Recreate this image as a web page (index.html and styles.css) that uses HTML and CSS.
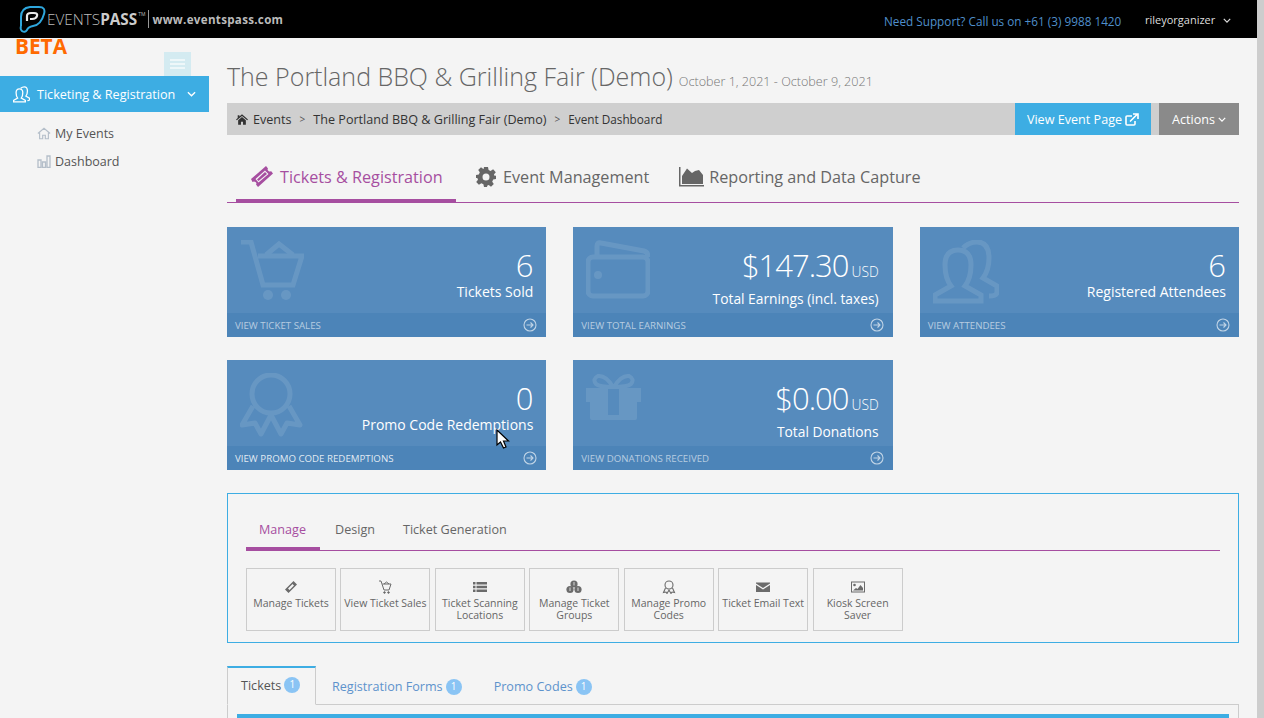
FILE: index.html
```html
<!DOCTYPE html>
<html lang="en">
<head>
  <meta charset="UTF-8" />
  <title>Event Dashboard</title>
  <link rel="stylesheet" href="styles.css">
</head>
<body>
  <div class="page">
    <header class="topbar">
      <div class="logo">
        <svg class="logo-mark" viewBox="0 0 28 28" width="28" height="28">
          <path d="M2 21 V12 Q2 3 11 2 H20 Q27 2 25 9 Q22 20 14 21 Q9 22 8 25 Q6 28 3 26 Q1 25 2 21" fill="none" stroke="#2ea6dc" stroke-width="2"/>
          <path d="M8 16 V11 Q8 8 12 8 H15 Q19 8 18 11 Q17 14 13 14 H11" fill="none" stroke="#e8e8e8" stroke-width="2.2"/>
        </svg>
        <span class="logo-name">EVENTS<b>PASS</b></span><sup class="logo-tm">TM</sup>
        <span class="logo-url">www.eventspass.com</span>
      </div>
      <div class="support">Need Support? Call us on +61 (3) 9988 1420</div>
      <div class="user">rileyorganizer
        <svg class="chev" viewBox="0 0 10 6" width="8" height="5"><path d="M1 1 L5 5 L9 1" fill="none" stroke="currentColor" stroke-width="1.5"/></svg>
      </div>
    </header>

    <div class="layout">
      <aside class="sidebar">
        <div class="side-top">
          <span class="beta">BETA</span>
          <button class="burger"><i></i><i></i><i></i></button>
        </div>
        <div class="side-active">
          <svg viewBox="0 0 66 64" width="17" height="17" fill="none" stroke="#fff" stroke-width="5"><path d="M2 61 V55 L18 46 Q12 38 12 25 Q12 10 25 10 Q38 10 38 25 Q38 38 32 46 L48 55 V61 Z"/><path d="M30 8 Q36 2 44 2 Q56 2 56 18 Q56 30 50 38 L64 46 V52 Q64 56 56 56"/></svg>
          <span>Ticketing &amp; Registration</span>
          <svg class="chev" viewBox="0 0 10 6" width="9" height="6"><path d="M1 1 L5 5 L9 1" fill="none" stroke="currentColor" stroke-width="1.5"/></svg>
        </div>
        <ul class="side-list">
          <li>
            <svg viewBox="0 0 16 14" width="14" height="13" fill="none" stroke="#b4bec9" stroke-width="1.3"><path d="M1 7 L8 1 L15 7 M3 6 V13 H6.5 V9 H9.5 V13 H13 V6"/></svg>
            My Events
          </li>
          <li>
            <svg viewBox="0 0 14 13" width="14" height="13" fill="none" stroke="#b4bec9" stroke-width="1.3"><path d="M1 5 H4 V12.5 H1 Z M5.5 7 H8.5 V12.5 H5.5 Z M10 1 H13 V12.5 H10 Z"/></svg>
            Dashboard
          </li>
        </ul>
      </aside>

      <main class="content">
        <div class="title-row">
          <h1>The Portland BBQ &amp; Grilling Fair (Demo)</h1>
          <small>October 1, 2021 - October 9, 2021</small>
        </div>

        <div class="crumbs">
          <svg viewBox="0 0 14 12" width="12" height="11" fill="#333"><path d="M7 0 L14 6 L13 7 L7 2 L1 7 L0 6 L2 4.3 V1 H4 V2.6 Z M2.5 7 L7 3.2 L11.5 7 V12 H8.2 V8.5 H5.8 V12 H2.5 Z"/></svg>
          <span>Events</span>
          <span class="sep">&gt;</span>
          <span>The Portland BBQ &amp; Grilling Fair (Demo)</span>
          <span class="sep">&gt;</span>
          <span class="crumb-last">Event Dashboard</span>
          <a class="btn btn-blue">View Event Page
            <svg viewBox="0 0 14 13" width="14" height="13" fill="none" stroke="#fff" stroke-width="1.6"><path d="M10 8 V11 Q10 12 9 12 H2 Q1 12 1 11 V4 Q1 3 2 3 H7"/><path d="M5 8.5 L12 1.5 M8 1 H13 V6" /></svg>
          </a>
          <a class="btn btn-grey">Actions
            <svg class="chev" viewBox="0 0 10 6" width="8" height="5"><path d="M1 1 L5 5 L9 1" fill="none" stroke="currentColor" stroke-width="1.6"/></svg>
          </a>
        </div>

        <nav class="main-tabs">
          <a class="main-tab active">
            <svg viewBox="0 0 22 21" width="22" height="21" fill="#a64ea0"><path fill-rule="evenodd" d="M15 0 L17 2.5 Q16 4 17.5 5 Q19 6 20 5 L22 7.5 L7 21 L5 18.5 Q6 17 4.5 16 Q3 15 1.5 16 L0 13 Z M14 4.5 L4.5 13 L7.5 16.5 L17.5 8 Z M14 6 L16 8 L7.5 15 L6 13.5 Z"/></svg>
            Tickets &amp; Registration
          </a>
          <a class="main-tab">
            <svg viewBox="0 0 20 20" width="20" height="20" fill="#666"><path fill-rule="evenodd" d="M8 0 H12 L12.6 3 L14.6 3.9 L17.1 2.2 L17.8 2.9 L19.8 5.2 L17.9 7.4 L18.8 9 L20 8.5 V12 L17.2 12.6 L16.2 14.8 L17.8 17.1 L15 19.8 L12.7 18 L11.4 18.6 L11 20 H8 L7.4 17.2 L5.4 16.2 L2.9 17.8 L0.2 15 L2 12.7 L1.3 11 L0 11 V8 L2.8 7.4 L3.8 5.2 L2.2 2.9 L5 0.2 L7.3 2 L7.6 2 Z M10 6.5 A3.5 3.5 0 1 0 10 13.5 A3.5 3.5 0 1 0 10 6.5 Z"/></svg>
            Event Management
          </a>
          <a class="main-tab">
            <svg viewBox="0 0 25 20" width="25" height="20" fill="#666"><path d="M0 0 H1.5 V18 H25 V19.5 H0 Z M3 17 V9 L8 1.5 L13 6 L16 4 L20 3 L24 8 V17 Z"/></svg>
            Reporting and Data Capture
          </a>
        </nav>

        <section class="cards">
          <article class="card">
            <div class="card-body">
              <svg class="card-icon" viewBox="0 0 64 64" width="64" height="64" fill="none" stroke="#fff" stroke-width="5"><path d="M1 2 H11 L23 45 H53 L62 16 H18"/><path d="M26 15 L39 4 L53 15"/><circle cx="28" cy="55" r="5" fill="#fff" stroke="none"/><circle cx="46" cy="55" r="5" fill="#fff" stroke="none"/></svg>
              <div class="card-text">
                <div class="num">6</div>
                <div class="label">Tickets Sold</div>
              </div>
            </div>
            <a class="card-foot">View Ticket Sales
              <svg viewBox="0 0 14 14" width="14" height="14" fill="none" stroke="#fff" stroke-width="1.1"><circle cx="7" cy="7" r="6"/><path d="M3.5 7 H10 M7.5 4.5 L10 7 L7.5 9.5"/></svg>
            </a>
          </article>

          <article class="card">
            <div class="card-body">
              <svg class="card-icon" viewBox="0 0 64 64" width="64" height="64" fill="none" stroke="#fff" stroke-width="5"><rect x="2" y="17" width="60" height="39" rx="5"/><path d="M11 17 V6 Q11 2 15 3 L58 11 Q62 12 62 17"/><circle cx="12" cy="35" r="4" fill="#fff" stroke="none"/></svg>
              <div class="card-text">
                <div class="num money"><span class="amount">$147.30</span><span class="usd">USD</span></div>
                <div class="label">Total Earnings (incl. taxes)</div>
              </div>
            </div>
            <a class="card-foot">View Total Earnings
              <svg viewBox="0 0 14 14" width="14" height="14" fill="none" stroke="#fff" stroke-width="1.1"><circle cx="7" cy="7" r="6"/><path d="M3.5 7 H10 M7.5 4.5 L10 7 L7.5 9.5"/></svg>
            </a>
          </article>

          <article class="card">
            <div class="card-body">
              <svg class="card-icon" viewBox="0 0 66 64" width="66" height="64" fill="none" stroke="#fff" stroke-width="5"><path d="M2 61 V55 L18 46 Q12 38 12 25 Q12 10 25 10 Q38 10 38 25 Q38 38 32 46 L48 55 V61 Z"/><path d="M30 8 Q36 2 44 2 Q56 2 56 18 Q56 30 50 38 L64 46 V52 Q64 56 56 56"/></svg>
              <div class="card-text">
                <div class="num">6</div>
                <div class="label">Registered Attendees</div>
              </div>
            </div>
            <a class="card-foot">View Attendees
              <svg viewBox="0 0 14 14" width="14" height="14" fill="none" stroke="#fff" stroke-width="1.1"><circle cx="7" cy="7" r="6"/><path d="M3.5 7 H10 M7.5 4.5 L10 7 L7.5 9.5"/></svg>
            </a>
          </article>

          <article class="card">
            <div class="card-body">
              <svg class="card-icon" viewBox="0 0 64 64" width="64" height="64" fill="none" stroke="#fff" stroke-width="5" stroke-linejoin="round"><circle cx="31" cy="21" r="19"/><path d="M13 33 L2 52 L15 50 L21 61 L31 42 L41 61 L47 50 L60 52 L49 33"/></svg>
              <div class="card-text">
                <div class="num">0</div>
                <div class="label">Promo Code Redemptions</div>
              </div>
            </div>
            <a class="card-foot hover">View Promo Code Redemptions
              <svg viewBox="0 0 14 14" width="14" height="14" fill="none" stroke="#fff" stroke-width="1.1"><circle cx="7" cy="7" r="6"/><path d="M3.5 7 H10 M7.5 4.5 L10 7 L7.5 9.5"/></svg>
            </a>
            <svg class="cursor" viewBox="0 0 14 20" width="14" height="20"><path d="M1 1 V16 L4.5 13 L7.5 19 L10 18 L7.5 12 L12.5 12 Z" fill="#fff" stroke="#000" stroke-width="1.2"/></svg>
          </article>

          <article class="card">
            <div class="card-body">
              <svg class="card-icon" viewBox="0 0 64 64" width="64" height="64"><path fill="#fff" fill-rule="evenodd" d="M0 15 H55 V29 H51 V45 Q51 47 49 47 H6 Q4 47 4 45 V29 H0 Z M22 16 H33 V42 H22 Z"/><path d="M27 14 Q20 2 12 3 Q6 6 10 11 Q13 14 27 14 Q42 14 45 11 Q49 6 43 3 Q35 2 28 14" fill="none" stroke="#fff" stroke-width="4"/></svg>
              <div class="card-text">
                <div class="num money"><span class="amount">$0.00</span><span class="usd">USD</span></div>
                <div class="label">Total Donations</div>
              </div>
            </div>
            <a class="card-foot">View Donations Received
              <svg viewBox="0 0 14 14" width="14" height="14" fill="none" stroke="#fff" stroke-width="1.1"><circle cx="7" cy="7" r="6"/><path d="M3.5 7 H10 M7.5 4.5 L10 7 L7.5 9.5"/></svg>
            </a>
          </article>
        </section>

        <section class="panel">
          <nav class="sub-tabs">
            <a class="sub-tab active">Manage</a>
            <a class="sub-tab">Design</a>
            <a class="sub-tab">Ticket Generation</a>
          </nav>
          <div class="tiles">
            <a class="tile">
              <svg viewBox="0 0 14 14" width="14" height="14" fill="#6b6b6b"><path d="M9.5 1 L13 4.5 L4.5 13 L1 9.5 Z M8.5 4 L4 8.5 L5.5 10 L10 5.5 Z" fill-rule="evenodd"/></svg>
              <span>Manage Tickets</span>
            </a>
            <a class="tile">
              <svg viewBox="0 0 14 14" width="14" height="14" fill="none" stroke="#6b6b6b" stroke-width="1"><path d="M1 1 H3 L6 10 H11 L13 4 H4.5 M6 4 L8.5 2 L11 4"/><circle cx="6.5" cy="12.5" r=".8" fill="#6b6b6b"/><circle cx="10.5" cy="12.5" r=".8" fill="#6b6b6b"/></svg>
              <span>View Ticket Sales</span>
            </a>
            <a class="tile">
              <svg viewBox="0 0 14 14" width="14" height="14" fill="#6b6b6b"><path d="M0 2 H2.5 V4.5 H0 Z M3.5 2 H14 V4.5 H3.5 Z M0 5.7 H2.5 V8.2 H0 Z M3.5 5.7 H14 V8.2 H3.5 Z M0 9.4 H2.5 V12 H0 Z M3.5 9.4 H14 V12 H3.5 Z"/></svg>
              <span>Ticket Scanning Locations</span>
            </a>
            <a class="tile">
              <svg viewBox="0 0 16 14" width="16" height="14" fill="#6b6b6b"><circle cx="8" cy="4" r="3.6"/><circle cx="4" cy="9.5" r="3.6"/><circle cx="12" cy="9.5" r="3.6"/><path d="M4 7.5 V11 M12 7.5 V11 M8 2 V5.5" stroke="#f4f4f4" stroke-width=".8"/></svg>
              <span>Manage Ticket Groups</span>
            </a>
            <a class="tile">
              <svg viewBox="0 0 14 14" width="14" height="14" fill="none" stroke="#6b6b6b" stroke-width="1.1"><circle cx="7" cy="5" r="4"/><path d="M3.5 8 L1.5 12.5 L4 12 L5 13.5 L7 10 L9 13.5 L10 12 L12.5 12.5 L10.5 8"/></svg>
              <span>Manage Promo Codes</span>
            </a>
            <a class="tile">
              <svg viewBox="0 0 14 14" width="14" height="14" fill="#6b6b6b"><path d="M0 2.5 H14 V3.5 L7 8 L0 3.5 Z M0 5 L7 9.5 L14 5 V12 H0 Z"/></svg>
              <span>Ticket Email Text</span>
            </a>
            <a class="tile">
              <svg viewBox="0 0 14 14" width="14" height="14" fill="#6b6b6b"><path fill-rule="evenodd" d="M0 1.5 H14 V12.5 H0 Z M1 2.5 V11.5 H13 V2.5 Z"/><circle cx="3.5" cy="5" r="1.3"/><path d="M2 10.5 L5 8 L6.5 9 L9.5 5 L12 8 V10.5 Z"/></svg>
              <span>Kiosk Screen Saver</span>
            </a>
          </div>
        </section>

        <nav class="list-tabs">
          <a class="list-tab active">Tickets <em class="badge">1</em></a>
          <a class="list-tab">Registration Forms <em class="badge">1</em></a>
          <a class="list-tab">Promo Codes <em class="badge">1</em></a>
        </nav>
        <div class="list-box"><div class="list-bar"></div></div>
      </main>
    </div>
  </div>
  <div class="scrollbar"></div>
</body>
</html>
```

FILE: styles.css
```css
* {
  box-sizing: border-box;
}

html, body {
  height: 718px;
  overflow: hidden;
}

body {
  margin: 0;
  display: flex;
  font-family: "Open Sans", Arial, sans-serif;
  background-color: #f4f4f4;
  color: #555;
}

a {
  text-decoration: none;
}

.page {
  flex: 1;
  min-width: 0;
}

.scrollbar {
  width: 7px;
  background-color: #cdcdcd;
}

/* top bar */
.topbar {
  display: flex;
  align-items: center;
  height: 38px;
  background-color: #000;
  color: #ddd;
}

.logo {
  display: flex;
  align-items: center;
  width: 884px;
  padding-left: 19px;
  color: #bbb;
}

.logo-mark {
  flex: none;
}

.logo-name {
  font-size: 15.3px;
  font-weight: 300;
}

.logo-name b {
  font-weight: 700;
  color: #ccc;
}

.logo-tm {
  height: 18px;
  margin: 0 3px 0 1px;
  padding-right: 3px;
  border-right: 1px solid #999;
  font-size: 5px;
  line-height: 8px;
}

.logo-url {
  font-size: 11.6px;
  font-weight: 700;
  letter-spacing: 0.3px;
  color: #bbb;
}

.support {
  width: 261px;
  font-size: 11.75px;
  color: #4f8fcb;
  margin-top: 4px;
}

.user {
  font-size: 11px;
  color: #ddd;
  margin-top: 1px;
}

.user .chev {
  margin-left: 5px;
  vertical-align: 1px;
}

.layout {
  display: flex;
}

/* sidebar */
.sidebar {
  flex: none;
  width: 209px;
}

.side-top {
  display: flex;
  justify-content: space-between;
  height: 38px;
  padding: 0 18px 0 15px;
}

.beta {
  font-size: 20.8px;
  line-height: 16px;
  font-weight: 700;
  color: #ff6a00;
}

.burger {
  align-self: flex-end;
  display: flex;
  flex-direction: column;
  justify-content: center;
  gap: 2px;
  width: 27px;
  height: 24px;
  padding: 0 6px;
  border: none;
  background-color: #d4ebf1;
}

.burger i {
  height: 2px;
  background-color: #eef7f9;
}

.side-active {
  display: flex;
  align-items: center;
  gap: 7px;
  height: 36px;
  padding-left: 13px;
  background-color: #3dade3;
  color: #fff;
  font-size: 12.6px;
}

.side-active .chev {
  margin-left: 5px;
}

.side-list {
  list-style: none;
  margin: 7px 0 0;
  padding: 0 0 0 37px;
  font-size: 12.5px;
}

.side-list li {
  display: flex;
  align-items: center;
  gap: 4px;
  height: 28px;
}

/* title */
.content {
  flex: 1;
  min-width: 0;
  padding: 20px 18px 0;
}

.title-row {
  display: flex;
  align-items: baseline;
  gap: 6px;
  height: 38px;
}

h1 {
  margin: 0;
  font-size: 25px;
  line-height: 37px;
  font-weight: 300;
  color: #666;
}

.title-row small {
  font-size: 12.6px;
  font-weight: 300;
  color: #777;
}

.crumbs {
  display: flex;
  align-items: center;
  gap: 5px;
  height: 32px;
  margin-top: 7px;
  padding-left: 9px;
  background-color: #cfcfcf;
  color: #333;
  font-size: 12.6px;
}

.sep {
  padding: 0 3px;
  font-size: 10px;
  color: #555;
}

.crumb-last {
  font-size: 11.75px;
  flex: 1;
}

.btn {
  display: flex;
  align-items: center;
  gap: 3px;
  height: 32px;
  color: #fff;
  font-size: 12.6px;
}

.btn-blue {
  justify-content: center;
  width: 136px;
  background-color: #3dade3;
  margin-right: 3px;
}

.btn-grey {
  justify-content: center;
  width: 80px;
  background-color: #8a8a8a;
}

/* big tabs */
.main-tabs {
  display: flex;
  height: 51px;
  margin-top: 17px;
  border-bottom: 1px solid #a64ea0;
}

.main-tab {
  display: flex;
  align-items: center;
  gap: 7px;
  height: 51px;
  padding: 0 10px 2px 20px;
  font-size: 16.2px;
  color: #666;
}

.main-tab:last-child {
  gap: 5px;
}

.main-tab.active {
  width: 220px;
  margin-left: 9px;
  padding: 2px 0 0 15px;
  color: #a64ea0;
  border-bottom: 4px solid #a64ea0;
}

/* stat cards */
.cards {
  display: grid;
  grid-template-columns: repeat(3, 1fr);
  gap: 23px 27px;
  margin-top: 24px;
}

.card {
  position: relative;
  height: 110px;
  background-color: #568bbd;
  color: #fff;
}

.card-body {
  display: flex;
  justify-content: space-between;
  height: 86px;
  padding: 13px 13px 0;
}

.card-icon {
  flex: none;
  opacity: 0.1;
}

.card-text {
  padding-top: 6px;
  text-align: right;
}

.num {
  font-size: 31px;
  line-height: 38px;
  font-weight: 300;
}

.money {
  margin-right: 1px;
}

.amount {
  letter-spacing: -1px;
}

.usd {
  margin-left: 3px;
  font-size: 13.8px;
  font-weight: 300;
}

.label {
  font-size: 14px;
  line-height: 16px;
  font-weight: 400;
}

.money + .label {
  margin-right: 1px;
  font-size: 13.8px;
}

.card-foot {
  display: flex;
  align-items: center;
  justify-content: space-between;
  height: 24px;
  padding: 0 9px 0 8px;
  background-color: #4c84b8;
  color: rgba(255, 255, 255, 0.6);
  font-size: 9.7px;
  text-transform: uppercase;
}

.card-foot.hover {
  color: rgba(255, 255, 255, 0.85);
}

.card-foot svg {
  opacity: 0.65;
}

.cursor {
  position: absolute;
  left: 269px;
  top: 69px;
}

/* manage panel */
.panel {
  height: 150px;
  margin-top: 23px;
  padding: 18px 18px 0;
  border: 1px solid #3dade3;
}

.sub-tabs {
  display: flex;
  height: 39px;
  border-bottom: 1px solid #a64ea0;
  font-size: 12.6px;
  color: #666;
}

.sub-tab {
  height: 39px;
  padding: 10px 14px 0;
  line-height: 16px;
}

.sub-tab.active {
  width: 74px;
  padding-left: 13px;
  margin-right: 1px;
  color: #a64ea0;
  border-bottom: 4px solid #a64ea0;
}

.tiles {
  display: flex;
  gap: 4.45px;
  margin-top: 17px;
}

.tile {
  display: flex;
  flex-direction: column;
  align-items: center;
  width: 90px;
  height: 63px;
  padding-top: 11px;
  border: 1px solid #ccc;
  color: #666;
  font-size: 10.5px;
  line-height: 12px;
  text-align: center;
}

.tile span {
  margin-top: 3px;
}

/* tabs at the bottom */
.list-tabs {
  display: flex;
  height: 39px;
  margin-top: 23px;
  border-bottom: 1px solid #ccc;
  font-size: 12.6px;
}

.list-tab {
  display: flex;
  align-items: center;
  gap: 3px;
  height: 39px;
  padding: 2px 16px 0;
  color: #5d93cc;
}

.list-tab.active {
  width: 89px;
  padding: 0 0 2px 13px;
  color: #555;
  background-color: #f4f4f4;
  border-top: 2px solid #3dade3;
  border-left: 1px solid #ccc;
  border-right: 1px solid #ccc;
  border-bottom: 1px solid #f4f4f4;
}

.badge {
  width: 16px;
  height: 16px;
  border-radius: 50%;
  background-color: #8ac4f4;
  color: #fff;
  font-size: 10px;
  font-style: normal;
  line-height: 15px;
  text-align: center;
}

.list-box {
  padding: 9px 9px 0;
  border-left: 1px solid #ccc;
  border-right: 1px solid #ccc;
}

.list-bar {
  height: 10px;
  background-color: #3dade3;
}
```
